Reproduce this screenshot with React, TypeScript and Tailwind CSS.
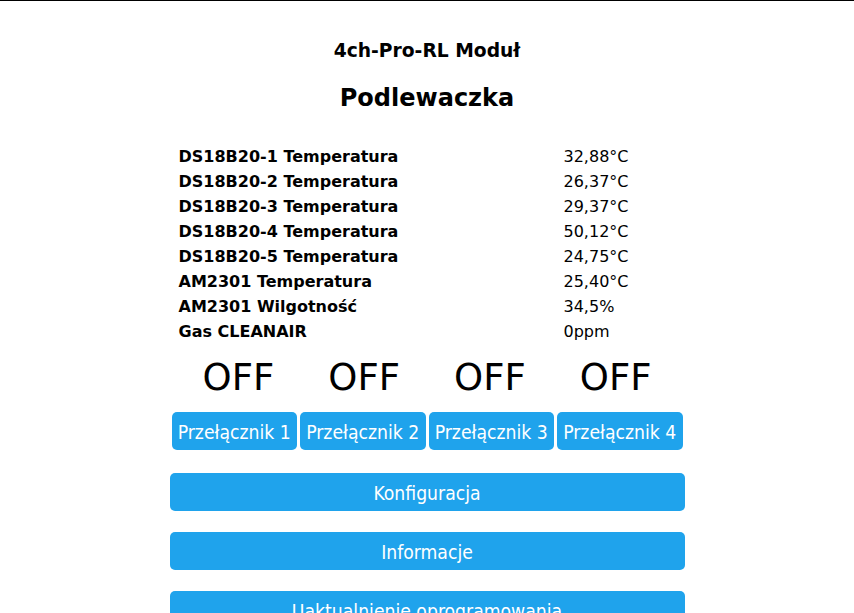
const sensors: [string, string][] = [
  ['DS18B20-1 Temperatura', '32,88°C'],
  ['DS18B20-2 Temperatura', '26,37°C'],
  ['DS18B20-3 Temperatura', '29,37°C'],
  ['DS18B20-4 Temperatura', '50,12°C'],
  ['DS18B20-5 Temperatura', '24,75°C'],
  ['AM2301 Temperatura', '25,40°C'],
  ['AM2301 Wilgotność', '34,5%'],
  ['Gas CLEANAIR', '0ppm'],
];

const btnFont = { fontFamily: '"DejaVu Sans Condensed", "DejaVu Sans", sans-serif' };

function MenuButton({ label, className = '' }: { label: string; className?: string }) {
  return (
    <button
      className={`block w-full h-[38px] pt-[3px] rounded-[5px] bg-[#1fa3ec] text-white text-[19.2px] leading-[35px] ${className}`}
      style={btnFont}
    >
      {label}
    </button>
  );
}

export default function App() {
  return (
    <div className="min-h-screen bg-white border-t border-black text-black font-['DejaVu_Sans',sans-serif]">
      <div className="w-[515px] mx-auto pt-[38px]">
        <h3 className="text-center font-bold text-[18.72px] leading-[24px]">4ch-Pro-RL Moduł</h3>
        <h2 className="mt-[20px] text-center font-bold text-[24px] leading-[30px]">Podlewaczka</h2>

        <div className="mt-[31px] pl-[9px]">
          {sensors.map(([name, value]) => (
            <div key={name} className="grid grid-cols-[385px_1fr] h-[25px] text-[16px] leading-[25px]">
              <span className="font-bold">{name}</span>
              <span>{value}</span>
            </div>
          ))}
        </div>

        <div className="mt-[12px] px-[6px] grid grid-cols-4">
          {[1, 2, 3, 4].map((n) => (
            <div key={n} className="text-center text-[37px] leading-[44px]">
              OFF
            </div>
          ))}
        </div>

        <div className="mt-[12px] px-[2px] grid grid-cols-4 gap-[3px]">
          {[1, 2, 3, 4].map((n) => (
            <MenuButton key={n} label={`Przełącznik ${n}`} />
          ))}
        </div>

        <MenuButton label="Konfiguracja" className="mt-[23px]" />
        <MenuButton label="Informacje" className="mt-[21px]" />
        <MenuButton label="Uaktualnienie oprogramowania" className="mt-[21px]" />
      </div>
    </div>
  );
}
